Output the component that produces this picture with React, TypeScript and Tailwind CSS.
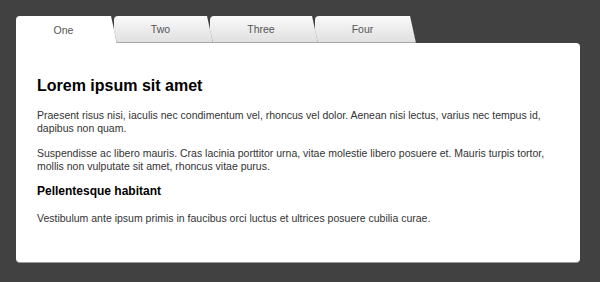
const tabs = ["One", "Two", "Three", "Four"];
const widths = ["w-[101px]", "w-[99px]", "w-[108px]", "w-[101px]"];

function Tab({ label, active, w, z }: { label: string; active: boolean; w: string; z: string }) {
  return (
    <div
      className={`relative h-[27px] ${w} ${z} -mr-[3px] rounded-t-[4px] [clip-path:polygon(0_0,calc(100%-6px)_0,100%_100%,0_100%)] ${
        active ? "bg-white" : "bg-gradient-to-b from-[#fafafa] to-[#e0e0e0] border-b border-[#a8a8a8]"
      }`}
    >
      <div className="flex h-full items-center justify-center pt-[2px] pr-[6px] text-[10.5px] text-[#555]">{label}</div>
      <div className="absolute right-[2px] top-0 h-full w-[1.5px] skew-x-[11deg] bg-[#8a8a8a]" />
    </div>
  );
}

export default function App() {
  return (
    <div className="w-[600px] h-[282px] bg-[#414141] pt-[16px] pl-[16px] font-['Liberation_Sans',Arial,sans-serif]">
      <div className="flex items-end">
        {tabs.map((t, i) => (
          <Tab
            key={t}
            label={t}
            active={i === 0}
            w={widths[i]}
            z={["z-40", "z-30", "z-20", "z-10"][i]}
          />
        ))}
      </div>
      <div className="w-[564px] h-[219px] bg-white rounded-b-[4px] rounded-tr-[4px] shadow-[0_1px_0_#9a9a9a] px-[21px] pt-[33px] text-[10.5px] leading-[13px] text-[#333]">
        <h1 className="text-[16px] leading-[20px] font-bold text-black">Lorem ipsum sit amet</h1>
        <p className="mt-[13px]">
          Praesent risus nisi, iaculis nec condimentum vel, rhoncus vel dolor. Aenean nisi lectus, varius nec tempus id,
          dapibus non quam.
        </p>
        <p className="mt-[12px]">
          Suspendisse ac libero mauris. Cras lacinia porttitor urna, vitae molestie libero posuere et. Mauris turpis tortor,
          mollis non vulputate sit amet, rhoncus vitae purus.
        </p>
        <h2 className="mt-[10px] text-[12px] leading-[16px] font-bold text-black">Pellentesque habitant</h2>
        <p className="mt-[13px]">Vestibulum ante ipsum primis in faucibus orci luctus et ultrices posuere cubilia curae.</p>
      </div>
    </div>
  );
}
